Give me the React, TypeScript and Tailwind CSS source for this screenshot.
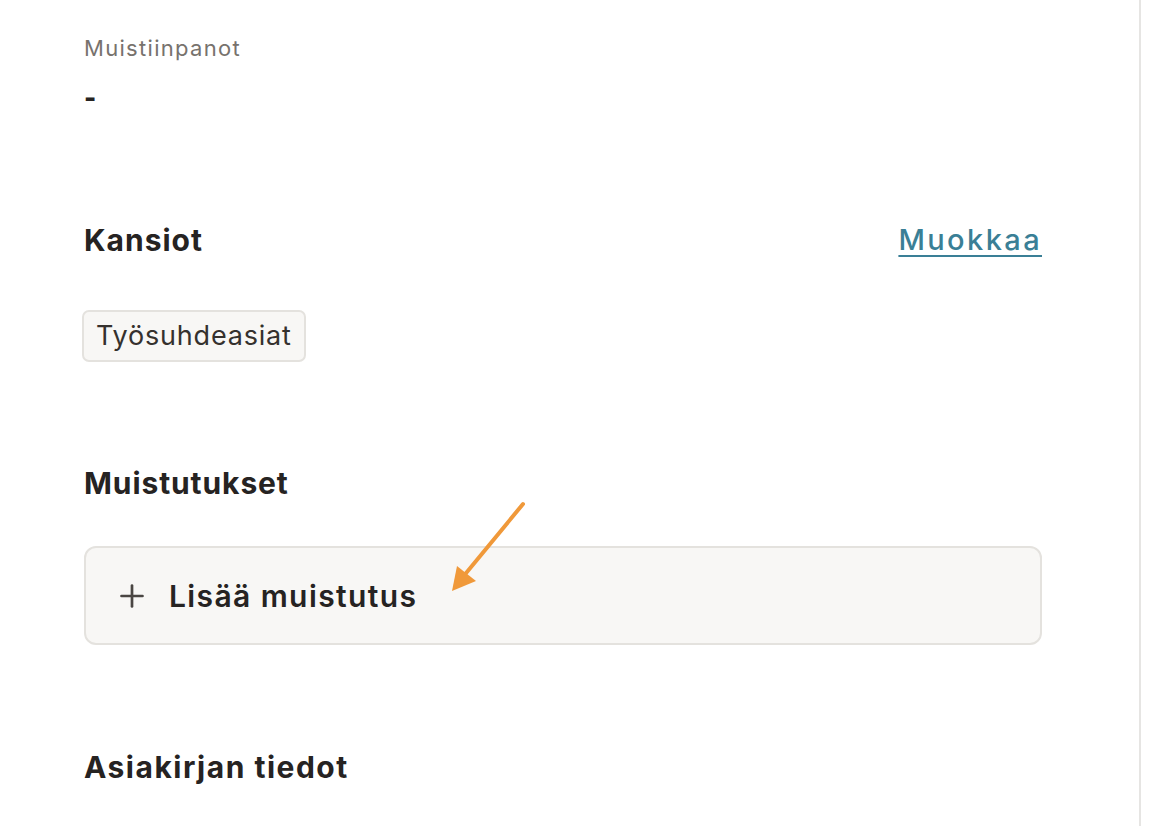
import { Plus } from "lucide-react";

export default function App() {
    return (
        <div
            className="flex h-[826px] w-[1152px] overflow-hidden bg-white text-[#262322]"
            style={{ fontFamily: "Inter, 'Noto Sans', sans-serif" }}
        >
            <div className="relative w-[1141px] shrink-0 border-r-2 border-[#e6e5e3] pl-[84px] pr-[97px] pt-[34px]">
                {/* Notes */}
                <p className="text-[22px] leading-[28px] tracking-[1.3px] text-[#77726d]">Muistiinpanot</p>
                <p className="mt-[20px] text-[26px] leading-[32px] font-extrabold">-</p>

                {/* Folders */}
                <div className="mt-[106px] flex items-center justify-between">
                    <h2 className="text-[30px] leading-[40px] font-bold tracking-[1px]">Kansiot</h2>
                    <a
                        href="#"
                        className="text-[29px] leading-[40px] font-medium tracking-[2.4px] text-[#3a7f96] underline decoration-2 underline-offset-[5px]"
                    >
                        Muokkaa
                    </a>
                </div>
                <div className="mt-[50px] flex">
                    <span className="-ml-[2px] rounded-[7px] border-2 border-[#e4e2de] bg-[#f8f7f5] px-[12px] text-[27px] leading-[48px] tracking-[0.8px] text-[#35312e]">
                        Työsuhdeasiat
                    </span>
                </div>

                {/* Reminders */}
                <h2 className="mt-[101px] text-[30px] leading-[40px] font-bold tracking-[0.9px]">Muistutukset</h2>
                <button className="mt-[43px] flex h-[99px] w-full items-center gap-[19px] rounded-[12px] border-2 border-[#e4e2de] bg-[#f8f7f5] pl-[28px] text-left">
                    <Plus className="h-[36px] w-[36px] text-[#4a4643]" strokeWidth={1.8} />
                    <span className="text-[30px] leading-[40px] font-semibold tracking-[1.4px]">Lisää muistutus</span>
                </button>

                {/* Document info */}
                <h2 className="mt-[102px] text-[30px] leading-[40px] font-bold tracking-[1.5px]">Asiakirjan tiedot</h2>

                {/* annotation arrow */}
                <svg
                    className="pointer-events-none absolute left-[440px] top-[495px]"
                    width="100"
                    height="110"
                    viewBox="0 0 100 110"
                >
                    <line x1="83" y1="9" x2="22" y2="83" stroke="#f0993a" strokeWidth="4" strokeLinecap="round" />
                    <polygon points="12,96 17,71 36,86" fill="#f0993a" />
                </svg>
            </div>
        </div>
    );
}
